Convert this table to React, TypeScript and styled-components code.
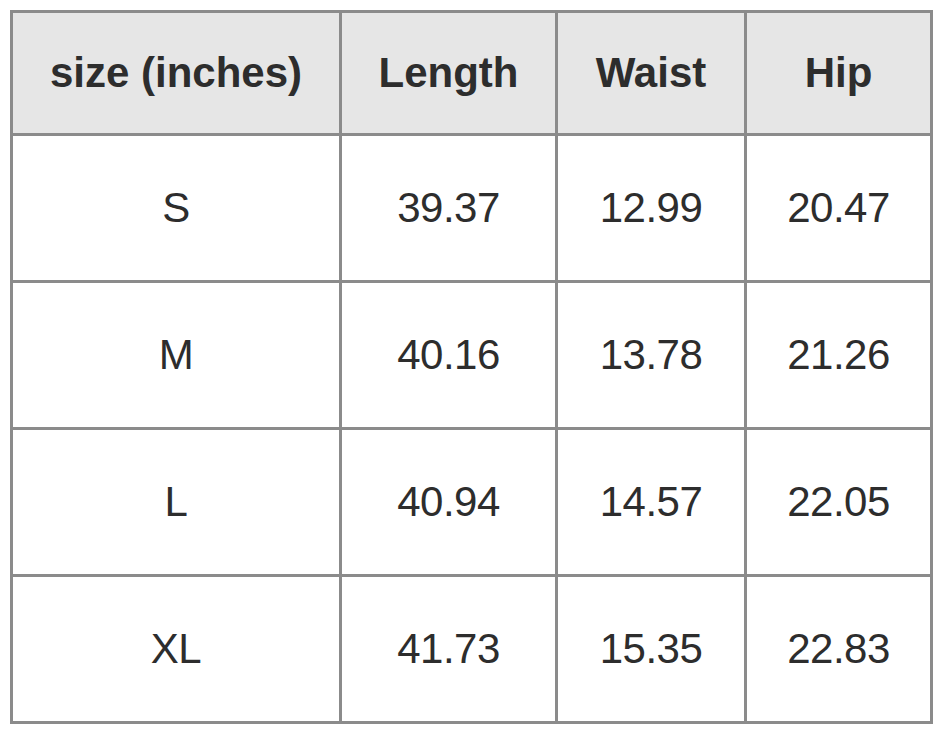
import styled, { createGlobalStyle } from 'styled-components'

const GlobalStyle = createGlobalStyle`
  html, body {
    margin: 0;
    padding: 0;
    background: #ffffff;
  }
  body {
    font-family: "Liberation Sans", Arial, sans-serif;
    color: #2d2d2d;
  }
`

const Page = styled.div`
  width: 943px;
  height: 734px;
  padding: 10px 0 0 10px;
  box-sizing: border-box;
`

const Table = styled.div`
  display: grid;
  grid-template-columns: 326px 213px 186px 183px;
  grid-template-rows: 120px repeat(4, 144px);
  gap: 3px;
  padding: 3px;
  width: fit-content;
  background: #8b8b8b;
`

const Cell = styled.div<{ $head?: boolean }>`
  display: flex;
  align-items: center;
  justify-content: center;
  background: ${(p) => (p.$head ? '#e6e6e6' : '#ffffff')};
  font-size: 42px;
  font-weight: ${(p) => (p.$head ? 700 : 400)};
  letter-spacing: ${(p) => (p.$head ? '0' : '-0.5px')};
  color: #2d2d2d;
`

const headers = ['size (inches)', 'Length', 'Waist', 'Hip']

const rows = [
  ['S', '39.37', '12.99', '20.47'],
  ['M', '40.16', '13.78', '21.26'],
  ['L', '40.94', '14.57', '22.05'],
  ['XL', '41.73', '15.35', '22.83']
]

export default function App() {
  return (
    <Page>
      <GlobalStyle />
      <Table role="table">
        {headers.map((h) => (
          <Cell key={h} $head role="columnheader">
            {h}
          </Cell>
        ))}
        {rows.map((row) =>
          row.map((value, i) => (
            <Cell key={row[0] + i} role="cell">
              {value}
            </Cell>
          ))
        )}
      </Table>
    </Page>
  )
}
